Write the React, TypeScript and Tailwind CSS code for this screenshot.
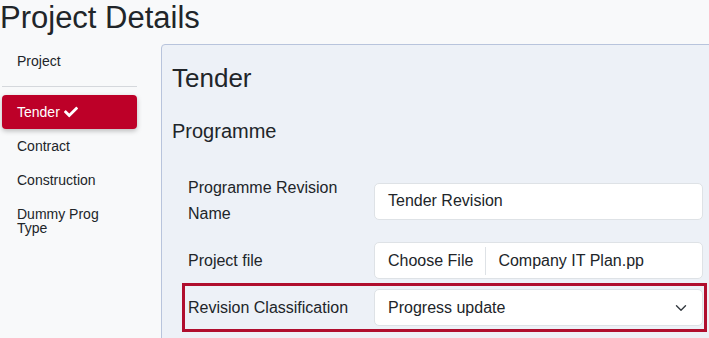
import { FaCheck } from 'react-icons/fa';

export default function App() {
  const navAfter = ['Contract', 'Construction', 'Dummy Prog Type'];

  return (
    <div className="w-[709px] h-[338px] overflow-hidden bg-[#f8f9fa] text-[#212529] font-['Liberation_Sans',Arial,sans-serif]">
      <h1 className="text-[31px] leading-[35px] whitespace-nowrap">Project Details</h1>

      <div className="flex mt-[9px]">
        {/* sidebar */}
        <nav className="w-[135px] ml-[2px] shrink-0 text-[14px] leading-[14px]">
          <div className="py-[10px] pl-[15px]">Project</div>
          <div className="mt-[8px] h-px bg-[#d5d8dc]" />
          <div className="mt-[8px] flex items-center gap-[4px] py-[10px] pl-[15px] rounded-[4px] bg-[#bd0028] text-white shadow-[0_2px_5px_rgba(0,0,0,0.25)]">
            <span>Tender</span>
            <FaCheck className="w-[14px] h-[14px]" />
          </div>
          {navAfter.map((item) => (
            <div key={item} className="py-[10px] pl-[15px] pr-[20px]">
              {item}
            </div>
          ))}
        </nav>

        {/* main panel */}
        <section className="ml-[24px] w-[600px] h-[400px] shrink-0 border border-[#b8c4dc] rounded-tl-[4px] bg-[#edf1f7] pt-[18px] pl-[10px]">
          <h2 className="text-[26px] leading-[31px]">Tender</h2>
          <h3 className="mt-[25px] text-[20px] leading-[24px]">Programme</h3>

          <div className="mt-[29px] ml-[10px] w-[525px] text-[16px]">
            <div className="flex items-center border-[3px] border-transparent pl-[3px] pr-[1px]">
              <label className="w-[186px] shrink-0 leading-[26px]">Programme Revision Name</label>
              <div className="flex-1 h-[37px] flex items-center px-[13px] bg-white border border-[#dee2e6] rounded-[5px]">
                Tender Revision
              </div>
            </div>

            <div className="mt-[9px] flex items-center border-[3px] border-transparent pl-[3px] pr-[1px]">
              <label className="w-[186px] shrink-0 leading-[26px]">Project file</label>
              <div className="flex-1 h-[37px] flex items-center bg-white border border-[#dee2e6] rounded-[5px]">
                <span className="pl-[13px] pr-[12px]">Choose File</span>
                <div className="w-px h-[28px] bg-[#dee2e6]" />
                <span className="pl-[12px] whitespace-nowrap">Company IT Plan.pp</span>
              </div>
            </div>

            <div className="mt-[1px] flex items-center border-[3px] border-[#b00e2e] py-[3px] pl-[3px] pr-[1px]">
              <label className="w-[186px] shrink-0 leading-[26px]">Revision Classification</label>
              <div className="flex-1 h-[37px] flex items-center justify-between pl-[13px] pr-[15px] bg-white border border-[#dee2e6] rounded-[5px]">
                <span>Progress update</span>
                <svg width="12" height="8" viewBox="0 0 12 8" fill="none">
                  <path d="M1.5 1.8 6 6.2l4.5-4.4" stroke="#343a40" strokeWidth="1.4" strokeLinecap="round" strokeLinejoin="round" />
                </svg>
              </div>
            </div>
          </div>
        </section>
      </div>
    </div>
  );
}
